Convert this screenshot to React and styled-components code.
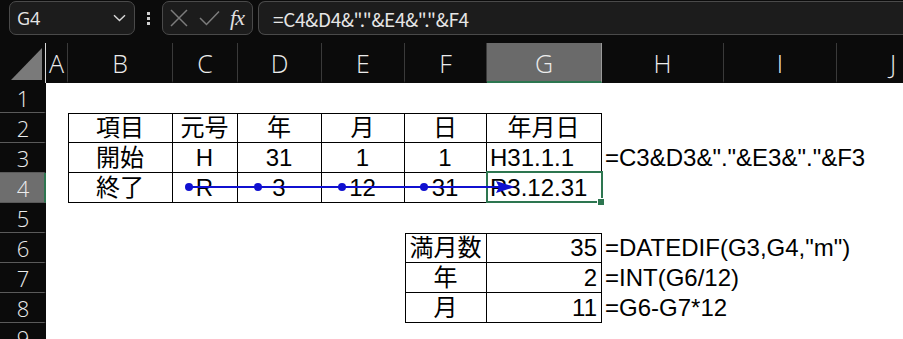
import React from 'react';
import styled, { createGlobalStyle } from 'styled-components';

const GlobalStyle = createGlobalStyle`
    html, body {
        margin: 0;
        padding: 0;
        background: #0b0b0b;
    }
`

const COLS = [
    {key: '', w: 46},
    {key: 'A', w: 22},
    {key: 'B', w: 105},
    {key: 'C', w: 65},
    {key: 'D', w: 84},
    {key: 'E', w: 83},
    {key: 'F', w: 82},
    {key: 'G', w: 115},
    {key: 'H', w: 122},
    {key: 'I', w: 113},
    {key: 'J', w: 113},
];

const TEXTFONT = `"Liberation Sans", "Noto Sans CJK JP", sans-serif`;
const UIFONT = `"Open Sans", "Noto Sans", sans-serif`;
const GREEN = '#2d7650';

const APP = styled.div`
    width: 903px;
    height: 339px;
    overflow: hidden;
    background: #0b0b0b;
`

const TOPBAR = styled.div`
    height: 43px;
    display: flex;
    align-items: flex-start;
    padding: 1px 0 0 9px;
    box-sizing: border-box;
    gap: 0;
`

const BOX = styled.div`
    height: 34px;
    box-sizing: border-box;
    border: 1px solid #4a4a4a;
    border-radius: 7px;
    background: #1c1c1c;
    display: flex;
    align-items: center;
    color: #e6e6e6;
`

const NAMEBOX = styled(BOX)`
    width: 126px;
    padding: 0 8px 0 7px;
    justify-content: space-between;
    font-family: ${UIFONT};
    font-size: 18px;
`

const DOTS = styled.div`
    width: 27px;
    height: 34px;
    display: flex;
    flex-direction: column;
    align-items: center;
    justify-content: center;
    gap: 2px;

    span {
        width: 3px;
        height: 3px;
        background: #d0d0d0;
    }
`

const FXBOX = styled(BOX)`
    width: 91px;
    padding: 0 6px 0 7px;
    justify-content: space-between;
    margin-right: 5px;
`

const FX = styled.span`
    font-family: "Liberation Serif", "DejaVu Serif", serif;
    font-style: italic;
    font-size: 22px;
    color: #e0e0e0;
    letter-spacing: -1px;
    padding-right: 2px;
`

const FORMULABOX = styled(BOX)`
    flex: 1;
    border-right: none;
    border-radius: 7px 0 0 7px;
    padding-left: 14px;
    font-family: "Noto Sans CJK JP", ${UIFONT};
    font-size: 19px;
    letter-spacing: -0.3px;
`

const SHEET = styled.div`
    position: relative;
    display: grid;
    grid-template-columns: ${COLS.map(c => c.w + 'px').join(' ')};
    grid-template-rows: 40px repeat(9, 30px);
    background: #ffffff;
    font-family: ${TEXTFONT};
    font-size: 24px;
    color: #000;
`

const CORNER = styled.div`
    background: #0b0b0b;
    position: relative;
    border-right: 1px solid #d8d8d8;
    box-sizing: border-box;

    &::after {
        content: '';
        position: absolute;
        right: 3px;
        bottom: 3px;
        width: 31px;
        height: 32px;
        background: #7a7a7a;
        clip-path: polygon(100% 0, 100% 100%, 0 100%);
    }
`

const COLHEAD = styled.div`
    background: ${p => p.$active ? '#6a6a6a' : '#0b0b0b'};
    border-right: 1px solid ${p => p.$active ? '#9a9a9a' : '#3a3a3a'};
    border-bottom: 2px solid ${p => p.$active ? GREEN : '#0b0b0b'};
    box-sizing: border-box;
    display: flex;
    align-items: center;
    justify-content: center;
    color: #ececec;
    font-family: ${UIFONT};
    font-weight: 300;
    font-size: 25px;
    padding-top: 2px;
`

const ROWHEAD = styled.div`
    background: ${p => p.$active ? '#6e6e6e' : '#0b0b0b'};
    border-bottom: 1px solid #5a5a5a;
    border-right: 2px solid ${p => p.$active ? GREEN : '#0b0b0b'};
    box-sizing: border-box;
    display: flex;
    align-items: center;
    justify-content: center;
    color: #ececec;
    font-family: ${UIFONT};
    font-weight: 300;
    font-size: 22px;
    padding-left: 2px;
`

const CELL = styled.div`
    position: relative;
    box-sizing: border-box;
    line-height: 30px;
    white-space: nowrap;
    overflow: visible;
    padding: 0 4px 0 3px;
    text-align: ${p => p.$align || 'left'};
    border-right: ${p => p.$box ? '1px solid #000' : 'none'};
    border-bottom: ${p => p.$box ? '1px solid #000' : 'none'};
    border-top: ${p => p.$top ? '1px solid #000' : 'none'};
    border-left: ${p => p.$left ? '1px solid #000' : 'none'};
    line-height: ${p => 30 - (p.$top ? 1 : 0) - (p.$box ? 1 : 0)}px;
    z-index: ${p => p.$selected ? 2 : 1};

    ${p => p.$selected && `
        &::after {
            content: '';
            position: absolute;
            left: -1px;
            top: -2px;
            right: -2px;
            bottom: -1px;
            border: 2px solid ${GREEN};
        }
        &::before {
            content: '';
            position: absolute;
            right: -4px;
            bottom: -4px;
            width: 6px;
            height: 6px;
            background: ${GREEN};
            border: 1px solid #fff;
            z-index: 3;
        }
    `}
`

const ARROWS = styled.svg`
    position: absolute;
    left: 0;
    top: 0;
    width: 903px;
    height: 300px;
    pointer-events: none;
    z-index: 5;
`

// data cells: [row, col, text, align, box, top, left, selected]
const c = (text, align, extra = {}) => ({text, align, ...extra});

const DATA = {
    2: {
        B: c('項目', 'center', {box: 1, top: 1, left: 1}),
        C: c('元号', 'center', {box: 1, top: 1}),
        D: c('年', 'center', {box: 1, top: 1}),
        E: c('月', 'center', {box: 1, top: 1}),
        F: c('日', 'center', {box: 1, top: 1}),
        G: c('年月日', 'center', {box: 1, top: 1}),
    },
    3: {
        B: c('開始', 'center', {box: 1, left: 1}),
        C: c('H', 'center', {box: 1}),
        D: c('31', 'center', {box: 1}),
        E: c('1', 'center', {box: 1}),
        F: c('1', 'center', {box: 1}),
        G: c('H31.1.1', 'left', {box: 1}),
        H: c('=C3&D3&"."&E3&"."&F3', 'left'),
    },
    4: {
        B: c('終了', 'center', {box: 1, left: 1}),
        C: c('R', 'center', {box: 1}),
        D: c('3', 'center', {box: 1}),
        E: c('12', 'center', {box: 1}),
        F: c('31', 'center', {box: 1}),
        G: c('R3.12.31', 'left', {box: 1, selected: 1}),
    },
    6: {
        F: c('満月数', 'center', {box: 1, top: 1, left: 1}),
        G: c('35', 'right', {box: 1, top: 1}),
        H: c('=DATEDIF(G3,G4,"m")', 'left'),
    },
    7: {
        F: c('年', 'center', {box: 1, left: 1}),
        G: c('2', 'right', {box: 1}),
        H: c('=INT(G6/12)', 'left'),
    },
    8: {
        F: c('月', 'center', {box: 1, left: 1}),
        G: c('11', 'right', {box: 1}),
        H: c('=G6-G7*12', 'left'),
    },
};

const Chevron = () => (
    <svg width="13" height="8" viewBox="0 0 13 8">
        <path d="M1 1.2 L6.5 6.5 L12 1.2" fill="none" stroke="#d8d8d8" strokeWidth="1.4"/>
    </svg>
);

const Cross = () => (
    <svg width="18" height="18" viewBox="0 0 18 18">
        <path d="M1 1 L17 17 M17 1 L1 17" stroke="#7c7c7c" strokeWidth="1.5"/>
    </svg>
);

const Check = () => (
    <svg width="21" height="16" viewBox="0 0 21 16">
        <path d="M1 8 L7.5 14.5 L20 1.5" fill="none" stroke="#7c7c7c" strokeWidth="1.5"/>
    </svg>
);

const TraceArrow = () => {
    const y = 144;
    const dots = [189, 258, 342, 424];
    return (
        <ARROWS viewBox="0 0 903 300">
            <line x1={189} y1={y} x2={500} y2={y} stroke="#1010d0" strokeWidth="2"/>
            {dots.map(x => <circle key={x} cx={x} cy={y} r="4" fill="#1010d0"/>)}
            <polygon points={`515,${y} 496,${y - 6} 499,${y} 496,${y + 6}`} fill="#1010d0"/>
        </ARROWS>
    );
};

const App = () => {
    const rows = [1, 2, 3, 4, 5, 6, 7, 8, 9];
    return (
        <APP>
            <GlobalStyle/>
            <TOPBAR>
                <NAMEBOX>
                    <span>G4</span>
                    <Chevron/>
                </NAMEBOX>
                <DOTS><span/><span/><span/></DOTS>
                <FXBOX>
                    <Cross/>
                    <Check/>
                    <FX>fx</FX>
                </FXBOX>
                <FORMULABOX>=C4&amp;D4&amp;"."&amp;E4&amp;"."&amp;F4</FORMULABOX>
            </TOPBAR>
            <SHEET>
                <CORNER/>
                {COLS.slice(1).map(col => (
                    <COLHEAD key={col.key} $active={col.key === 'G'}>{col.key}</COLHEAD>
                ))}
                {rows.map(r => (
                    <React.Fragment key={r}>
                        <ROWHEAD $active={r === 4}>{r}</ROWHEAD>
                        {COLS.slice(1).map(col => {
                            const d = (DATA[r] || {})[col.key];
                            if (!d) return <CELL key={col.key}/>;
                            return (
                                <CELL key={col.key} $align={d.align} $box={d.box} $top={d.top}
                                      $left={d.left} $selected={d.selected}>
                                    {d.text}
                                </CELL>
                            );
                        })}
                    </React.Fragment>
                ))}
                <TraceArrow/>
            </SHEET>
        </APP>
    );
};

export default App;
